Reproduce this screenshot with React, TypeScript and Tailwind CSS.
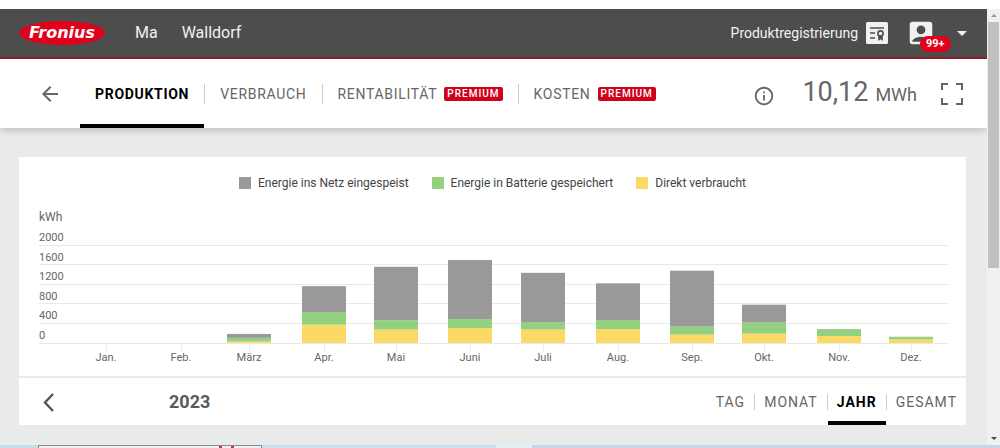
import { useState } from "react";
import clsx from "clsx";
import { MdAccountBox, MdArrowBack, MdArrowDropDown, MdInfoOutline } from "react-icons/md";

interface MonthData {
  label: string;
  x: number;
  direct: number;
  battery: number;
  grid: number;
}

// x is the middle of the month's bar on the time axis
const MONTHS: MonthData[] = [
  { label: "Jan.", x: 67, direct: 0, battery: 0, grid: 0 },
  { label: "Feb.", x: 142, direct: 0, battery: 0, grid: 0 },
  { label: "März", x: 210, direct: 30, battery: 75, grid: 80 },
  { label: "Apr.", x: 285, direct: 375, battery: 255, grid: 530 },
  { label: "Mai", x: 357, direct: 275, battery: 190, grid: 1090 },
  { label: "Juni", x: 431, direct: 305, battery: 183, grid: 1205 },
  { label: "Juli", x: 504, direct: 275, battery: 152, grid: 1005 },
  { label: "Aug.", x: 579, direct: 284, battery: 183, grid: 751 },
  { label: "Sep.", x: 653, direct: 173, battery: 162, grid: 1141 },
  { label: "Okt.", x: 725, direct: 193, battery: 223, grid: 366 },
  { label: "Nov.", x: 800, direct: 142, battery: 142, grid: 0 },
  { label: "Dez.", x: 872, direct: 75, battery: 53, grid: 0 },
];

const LEGEND = [
  { label: "Energie ins Netz eingespeist", color: "bg-[#999999]" },
  { label: "Energie in Batterie gespeichert", color: "bg-[#93d080]" },
  { label: "Direkt verbraucht", color: "bg-[#fbd965]" },
];

const TABS = [
  { label: "PRODUKTION", premium: false },
  { label: "VERBRAUCH", premium: false },
  { label: "RENTABILITÄT", premium: true },
  { label: "KOSTEN", premium: true },
];

const RANGES = ["TAG", "MONAT", "JAHR", "GESAMT"];

const TICKS = [0, 400, 800, 1200, 1600, 2000];
const BASE_Y = 133;
const BAR_WIDTH = 44;
const toPx = (kwh: number) => (kwh * 98) / 2000;

function Logo() {
  return (
    <svg viewBox="0 0 88 26" className="w-[88px] h-[26px]" role="img" aria-label="Fronius">
      <ellipse cx="44" cy="13" rx="43" ry="12" fill="#e2001a" />
      <text
        x="44"
        y="18"
        textAnchor="middle"
        fontFamily="DejaVu Sans, sans-serif"
        fontSize="16"
        fontWeight="700"
        fontStyle="italic"
        fill="#fff"
      >
        Fronius
      </text>
    </svg>
  );
}

function RegistrationIcon() {
  return (
    <svg viewBox="0 0 22 22" className="size-[22px]" aria-hidden="true">
      <rect width="22" height="22" rx="1.5" fill="#f0f1f1" />
      <path d="M4 6h14M4 11h5M4 16h5" stroke="#4d4d4d" strokeWidth="1.7" fill="none" />
      <circle cx="14.5" cy="11.5" r="2.6" stroke="#4d4d4d" strokeWidth="1.6" fill="#f0f1f1" />
      <path d="M12.2 13.5h4.6v5.5l-2.3-1.8-2.3 1.8z" fill="#4d4d4d" />
    </svg>
  );
}

function Header() {
  return (
    <header className="flex items-center h-[50px] pl-[18px] pr-[13px] bg-[#4d4d4d] border-b-2 border-[#9b1c2c] text-[#f0f1f1]">
      <Logo />
      <div className="flex gap-6 ml-[29px] text-base">
        <span>Ma</span>
        <span>Walldorf</span>
      </div>
      <a href="#registrierung" className="ml-auto flex items-center gap-2 text-sm">
        Produktregistrierung
        <RegistrationIcon />
      </a>
      <button type="button" aria-label="Konto" className="relative ml-[18px]">
        <MdAccountBox className="size-[30px]" />
        <span className="absolute left-[14px] top-[18px] rounded-full bg-[#e2001a] px-[6px] text-[11px] leading-4 font-bold text-white">
          99+
        </span>
      </button>
      <button type="button" aria-label="Menü" className="ml-[14px]">
        <MdArrowDropDown className="size-6" />
      </button>
    </header>
  );
}

function TabBar() {
  const [active, setActive] = useState("PRODUKTION");

  return (
    <nav className="flex items-center h-[69px] pl-[38px] pr-[24px] bg-white text-[#666] shadow-[0_2px_8px_rgba(0,0,0,0.2)]">
      <button type="button" aria-label="Zurück">
        <MdArrowBack className="size-6" />
      </button>
      <div className="flex self-stretch ml-[18px]">
        {TABS.map((tab, i) => (
          <div key={tab.label} className="flex items-center">
            {i > 0 && <span className="w-px h-5 bg-[#ccc]" />}
            <button
              type="button"
              onClick={() => setActive(tab.label)}
              className={clsx(
                "flex items-center gap-[7px] h-full px-[15px] border-y-4 border-t-transparent text-sm tracking-wider",
                active === tab.label ? "border-b-black font-bold text-black" : "border-b-transparent"
              )}
            >
              {tab.label}
              {tab.premium && (
                <span className="rounded-xs bg-[#d0021b] px-[3px] text-[10px] leading-[14px] tracking-[1px] font-medium text-white">
                  PREMIUM
                </span>
              )}
            </button>
          </div>
        ))}
      </div>
      <button type="button" aria-label="Info" className="ml-auto mt-1">
        <MdInfoOutline className="size-[22px]" />
      </button>
      <p className="ml-[27px] flex items-baseline gap-[7px]">
        <span className="text-[27px] leading-8">10,12</span>
        <span className="text-lg leading-8">MWh</span>
      </p>
      <button type="button" aria-label="Vollbild" className="ml-6">
        <svg viewBox="0 0 22 22" className="size-[22px]" aria-hidden="true">
          <path
            d="M1 7V1h6M15 1h6v6M21 15v6h-6M7 21H1v-6"
            fill="none"
            stroke="currentColor"
            strokeWidth="2"
          />
        </svg>
      </button>
    </nav>
  );
}

function Chart() {
  return (
    <svg viewBox="0 0 909 166" className="block w-full" role="img" aria-label="Produktion 2023 in kWh">
      <text x="0" y="11" fontSize="12" fill="#666">
        kWh
      </text>
      {TICKS.map((tick) => (
        <g key={tick}>
          <rect x="0" y={Math.floor(BASE_Y - toPx(tick))} width="909" height="1" fill="#e9e9e9" />
          <text x="0" y={BASE_Y - toPx(tick) - 4} fontSize="11" fill="#666">
            {tick}
          </text>
        </g>
      ))}
      {MONTHS.map((m) => {
        const direct = toPx(m.direct);
        const battery = toPx(m.battery);
        const grid = toPx(m.grid);
        const left = m.x - BAR_WIDTH / 2;
        return (
          <g key={m.label}>
            <rect x={m.x} y={BASE_Y} width="1" height="8" fill="#e9e9e9" />
            <rect x={left} y={BASE_Y - direct} width={BAR_WIDTH} height={direct} fill="#fbd965" />
            <rect x={left} y={BASE_Y - direct - battery} width={BAR_WIDTH} height={battery} fill="#93d080" />
            <rect x={left} y={BASE_Y - direct - battery - grid} width={BAR_WIDTH} height={grid} fill="#999" />
            <text x={m.x} y="151" fontSize="11" fill="#666" textAnchor="middle">
              {m.label}
            </text>
          </g>
        );
      })}
    </svg>
  );
}

function RangeBar() {
  const [range, setRange] = useState("JAHR");

  return (
    <div className="flex items-center h-[49px] pl-[18px] border-t-2 border-[#e9ebeb] text-[#666]">
      <button type="button" aria-label="Vorheriges Jahr">
        <svg viewBox="0 0 24 24" className="size-6" aria-hidden="true">
          <path d="M16 4l-8 8.5 8 8.5" fill="none" stroke="#555" strokeWidth="2.4" />
        </svg>
      </button>
      <span className="ml-[108px] text-lg font-bold text-[#5a5a5a]">2023</span>
      <div className="ml-auto flex self-stretch">
        {RANGES.map((r, i) => (
          <div key={r} className="flex items-center">
            {i > 0 && <span className="w-px h-4 bg-[#ccc]" />}
            <button
              type="button"
              onClick={() => setRange(r)}
              className={clsx(
                "h-full px-[9px] border-y-4 border-t-transparent text-sm tracking-[1px]",
                range === r ? "border-b-black font-bold text-black" : "border-b-transparent"
              )}
            >
              {r}
            </button>
          </div>
        ))}
      </div>
    </div>
  );
}

function Scrollbar() {
  return (
    <div className="flex flex-col items-center w-[13px] bg-[#f1f1f1]" aria-hidden="true">
      <div className="flex items-center h-[13px]">
        <div className="border-x-3 border-b-3 border-x-transparent border-b-[#999]" />
      </div>
      <div className="flex-[3] w-[11px] bg-[#c1c1c1]" />
      <div className="flex-[2]" />
      <div className="flex items-center h-[13px]">
        <div className="border-x-3 border-t-3 border-x-transparent border-t-[#444]" />
      </div>
    </div>
  );
}

export default function App() {
  return (
    <div className="bg-white pt-[9px] font-[Roboto,sans-serif]">
      <div className="flex">
        <div className="flex-1 min-w-0 overflow-hidden bg-[#e9ebeb]">
          <Header />
          <TabBar />
          <main className="pt-[29px] pb-5 pl-[19px] pr-[21px]">
            <section className="bg-white">
              <ul className="flex justify-center gap-[23px] pt-4 text-xs leading-5 text-[#444]">
                {LEGEND.map((item) => (
                  <li key={item.label} className="flex items-center gap-[7px]">
                    <span className={clsx("size-3", item.color)} />
                    {item.label}
                  </li>
                ))}
              </ul>
              <div className="pl-5 pr-[18px] pt-[17px]">
                <Chart />
              </div>
              <RangeBar />
            </section>
          </main>
        </div>
        <Scrollbar />
      </div>
      {/* top edge of whatever lies behind the window */}
      <div className="flex h-[3px] bg-[#c9d3ea]" aria-hidden="true">
        <div className="w-[38px] bg-[#c3dfec]" />
        <div className="flex items-start gap-[9px] w-[224px] pl-[180px] border-x border-t border-[#888] bg-[#f1f1ef]">
          <span className="w-[3px] h-[2px] bg-[#c43a3a]" />
          <span className="w-[3px] h-[2px] bg-[#c43a3a]" />
        </div>
        <div className="w-[234px] bg-[#c9dfec]" />
        <div className="w-[36px] bg-[#e4eff6]" />
      </div>
    </div>
  );
}
